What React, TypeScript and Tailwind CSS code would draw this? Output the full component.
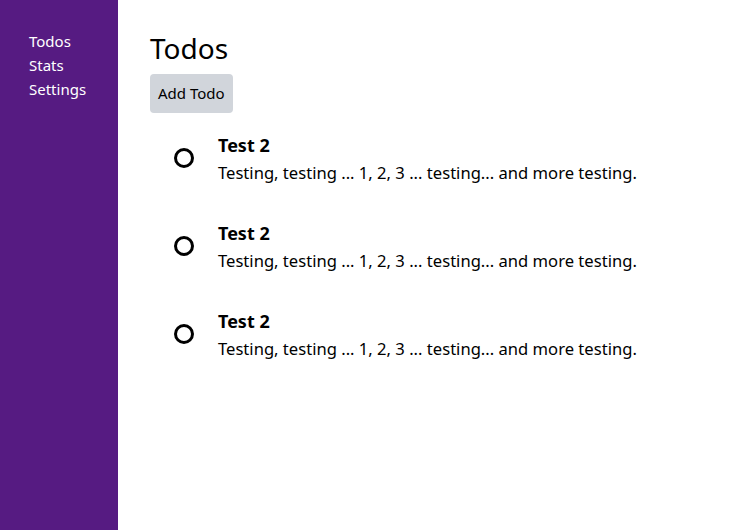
import React from "react";

const items = [1, 2, 3];

export default function App() {
  return (
    <div className="flex h-[530px] w-full" style={{ fontFamily: '"Noto Sans", sans-serif' }}>
      <nav className="w-[118px] shrink-0 bg-[#561b82] pl-[29px] pt-[29px] text-white">
        <div className="flex flex-col text-[15px] leading-[24px]">
          <a>Todos</a>
          <a>Stats</a>
          <a>Settings</a>
        </div>
      </nav>
      <main className="flex-1 pl-[32px] pt-[28px] text-black">
        <h1 className="text-[28px] leading-[40px]">Todos</h1>
        <button className="mt-[6px] h-[39px] rounded bg-[#d1d5db] px-[8px] text-[15px]">Add Todo</button>
        <ul className="mt-[20px] flex flex-col gap-[34px] pl-[24px]">
          {items.map((i) => (
            <li key={i} className="flex items-start gap-[24px]">
              <span className="mt-[15px] h-[20px] w-[20px] shrink-0 rounded-full border-[3px] border-black" />
              <div>
                <div className="text-[18px] font-bold leading-[24px]">Test 2</div>
                <div className="mt-[2px] text-[16.6px] leading-[28px]">Testing, testing ... 1, 2, 3 ... testing... and more testing.</div>
              </div>
            </li>
          ))}
        </ul>
      </main>
    </div>
  );
}
